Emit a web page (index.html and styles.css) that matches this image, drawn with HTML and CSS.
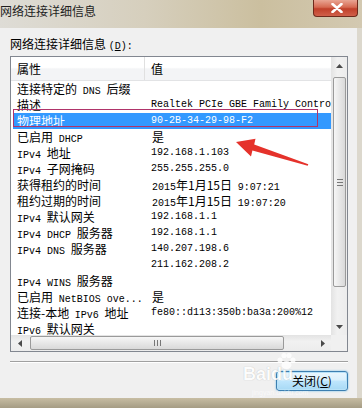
FILE: index.html
```html
<!DOCTYPE html>
<html lang="zh-CN">
<head>
  <meta charset="UTF-8">
  <title>网络连接详细信息</title>
  <link rel="stylesheet" href="styles.css">
</head>
<body>
  <div class="titlebar">
    <div class="title">网络连接详细信息</div>
    <div class="close">
      <svg width="12" height="10" viewBox="0 0 12 10"><path d="M1.5 1 L10.5 9 M10.5 1 L1.5 9" stroke="#fff" stroke-width="2.6" stroke-linecap="round"/></svg>
    </div>
  </div>

  <div class="client">
    <div class="label">网络连接详细信息 <span class="m">(<u>D</u>):</span></div>
    <div class="listbox">
      <div class="content">
        <div class="header">
          <div class="hk">属性</div>
          <div class="hv">值</div>
        </div>
        <div class="row"><div class="k">连接特定的 <span class="m">DNS</span> 后缀</div><div class="v"></div></div>
        <div class="row"><div class="k">描述</div><div class="v m">Realtek PCIe GBE Family Controller</div></div>
        <div class="row sel"><div class="k">物理地址</div><div class="v m">90-2B-34-29-98-F2</div></div>
        <div class="row"><div class="k">已启用 <span class="m">DHCP</span></div><div class="v">是</div></div>
        <div class="row"><div class="k"><span class="m">IPv4</span> 地址</div><div class="v m">192.168.1.103</div></div>
        <div class="row"><div class="k"><span class="m">IPv4</span> 子网掩码</div><div class="v m">255.255.255.0</div></div>
        <div class="row"><div class="k">获得租约的时间</div><div class="v"><span class="m">2015</span>年1月15日 <span class="m">9:07:21</span></div></div>
        <div class="row"><div class="k">租约过期的时间</div><div class="v"><span class="m">2015</span>年1月15日 <span class="m">19:07:20</span></div></div>
        <div class="row"><div class="k"><span class="m">IPv4</span> 默认网关</div><div class="v m">192.168.1.1</div></div>
        <div class="row"><div class="k"><span class="m">IPv4 DHCP</span> 服务器</div><div class="v m">192.168.1.1</div></div>
        <div class="row"><div class="k"><span class="m">IPv4 DNS</span> 服务器</div><div class="v m">140.207.198.6</div></div>
        <div class="row"><div class="k"></div><div class="v m">211.162.208.2</div></div>
        <div class="row"><div class="k"><span class="m">IPv4 WINS</span> 服务器</div><div class="v"></div></div>
        <div class="row"><div class="k">已启用 <span class="m">NetBIOS ove...</span></div><div class="v">是</div></div>
        <div class="row"><div class="k">连接-本地 <span class="m">IPv6</span> 地址</div><div class="v m">fe80::d113:350b:ba3a:200%12</div></div>
        <div class="row"><div class="k"><span class="m">IPv6</span> 默认网关</div><div class="v"></div></div>
      </div>

      <div class="vscroll">
        <div class="sbtn"><svg width="7" height="4" viewBox="0 0 7 4"><path d="M0 4 L3.5 0 L7 4 Z" fill="#4a4a4a"/></svg></div>
        <div class="vtrack">
          <div class="vthumb"><span class="grip-h"></span></div>
        </div>
        <div class="sbtn"><svg width="7" height="4" viewBox="0 0 7 4"><path d="M0 0 L3.5 4 L7 0 Z" fill="#4a4a4a"/></svg></div>
      </div>

      <div class="hscroll">
        <div class="sbtn"><svg width="4" height="7" viewBox="0 0 4 7"><path d="M4 0 L0 3.5 L4 7 Z" fill="#4a4a4a"/></svg></div>
        <div class="htrack">
          <div class="hthumb"><span class="grip-v"></span></div>
        </div>
        <div class="sbtn"><svg width="4" height="7" viewBox="0 0 4 7"><path d="M0 0 L4 3.5 L0 7 Z" fill="#4a4a4a"/></svg></div>
      </div>
      <div class="corner"></div>
    </div>

    <div class="separator"></div>
    <div class="buttons">
      <button class="btn">关闭(<u>C</u>)</button>
    </div>
  </div>
  <div class="frame-bottom"></div>

  <!-- annotation drawn over the screenshot -->
  <div class="mark"></div>
  <svg class="arrow" width="362" height="408" viewBox="0 0 362 408">
    <path d="M236 142 L255.5 138.8 L254.2 144.4 L308.3 164.3 L307.7 165.8 L252.4 150.6 L251 156.4 Z" fill="#e5322b"/>
  </svg>

  <div class="watermark">
    <svg class="paw" width="22" height="18" viewBox="0 0 22 18">
      <circle cx="5" cy="8" r="2.6" fill="#fff"/>
      <circle cx="9" cy="3.5" r="2.6" fill="#fff"/>
      <circle cx="14" cy="3.5" r="2.6" fill="#fff"/>
      <circle cx="18" cy="8" r="2.6" fill="#fff"/>
      <ellipse cx="11.5" cy="13" rx="5" ry="4" fill="#fff"/>
    </svg>
    <span class="wm-text">Baidu</span>
  </div>
  <div class="wm-url">jingyan.baidu.com</div>
</body>
</html>
```

FILE: styles.css
```css
body {
  margin: 0;
  width: 362px;
  height: 408px;
  overflow: hidden;
  position: relative;
  background: #dcd8cd;
  font-family: "Noto Sans CJK SC", sans-serif;
  font-size: 12px;
  color: #000;
}
.m {
  font-family: "Liberation Mono", "Noto Sans CJK SC", monospace;
  font-size: 10px;
  word-spacing: 0;
}
.titlebar {
  height: 28px;
  display: flex;
  align-items: flex-start;
  background: linear-gradient(90deg, #dedcd6 0%, #d6cfbd 40%, #cbbf9f 72%, #d3c9b1 100%);
}
.title {
  line-height: 22px;
  color: #1e1e1e;
}
.close {
  margin-left: auto;
  margin-right: 4px;
  width: 45px;
  height: 17px;
  box-sizing: border-box;
  border: 1px solid #6e2a1c;
  border-top: none;
  border-radius: 0 0 4px 4px;
  background: linear-gradient(#e9a593 0%, #d66a52 45%, #c0402a 55%, #d0604a 100%);
  display: flex;
  justify-content: center;
  align-items: center;
  padding-left: 3px;
}
.client {
  height: 370px;
  margin-right: 5px;
  background: #f0f0f0;
  padding: 0 9px 0 10px;
  display: flex;
  flex-direction: column;
}
.label {
  line-height: 16px;
  margin-top: 8px;
}
.listbox {
  margin-top: 1px;
  height: 296px;
  box-sizing: border-box;
  border: 1px solid #828790;
  background: #fff;
  display: grid;
  grid-template-columns: 1fr 16px;
  grid-template-rows: 1fr 16px;
}
.content {
  overflow: hidden;
  white-space: nowrap;
}
.header {
  display: flex;
  height: 23px;
  line-height: 23px;
  border-bottom: 1px solid #e2e3e5;
  background: linear-gradient(#ffffff 0%, #ffffff 45%, #f3f4f6 52%, #f3f4f6 100%);
}
.hk {
  width: 134px;
  box-sizing: border-box;
  padding-left: 6px;
  border-right: 1px solid #e0e0e0;
}
.hv {
  padding-left: 6px;
}
.row {
  display: flex;
  height: 16px;
  line-height: 16px;
  word-spacing: 3px;
}
.row .k {
  width: 134px;
  flex: none;
  box-sizing: border-box;
  padding-left: 6px;
  overflow: hidden;
}
.row .v {
  padding-left: 7px;
}
.row .v.m {
  padding-left: 6px;
}
.row.sel {
  background: linear-gradient(90deg, transparent 2px, #3399ff 2px);
  color: #fff;
}
.vscroll {
  display: flex;
  flex-direction: column;
  background: linear-gradient(90deg, #e3e3e3, #f1f1f1 40%, #ececec);
}
.sbtn {
  height: 17px;
  flex: none;
  display: flex;
  justify-content: center;
  align-items: center;
}
.vtrack {
  flex: 1;
  padding-top: 3px;
}
.vthumb {
  margin-left: 2px;
  width: 13px;
  height: 210px;
  box-sizing: border-box;
  border: 1px solid #9a9a9a;
  border-radius: 2px;
  background: linear-gradient(90deg, #f6f6f6, #e6e6e6 55%, #d9d9d9);
  display: flex;
  justify-content: center;
  align-items: center;
}
.grip-h {
  width: 6px;
  height: 5px;
  border-top: 1px solid #777;
  border-bottom: 1px solid #777;
  background: linear-gradient(transparent 2px, #777 2px, #777 3px, transparent 3px);
}
.hscroll {
  display: flex;
  background: linear-gradient(#e3e3e3, #f1f1f1 40%, #ececec);
}
.hscroll .sbtn {
  width: 17px;
  height: 16px;
}
.htrack {
  flex: 1;
  padding-left: 2px;
}
.hthumb {
  margin-top: 1px;
  width: 254px;
  height: 14px;
  box-sizing: border-box;
  border: 1px solid #9a9a9a;
  border-radius: 2px;
  background: linear-gradient(#f6f6f6, #e6e6e6 55%, #d9d9d9);
  display: flex;
  justify-content: center;
  align-items: center;
}
.grip-v {
  width: 5px;
  height: 6px;
  border-left: 1px solid #777;
  border-right: 1px solid #777;
  background: linear-gradient(90deg, transparent 2px, #777 2px, #777 3px, transparent 3px);
}
.corner {
  background: #f0f0f0;
}
.separator {
  margin-top: 9px;
  border-top: 1px solid #a0a0a0;
  border-bottom: 1px solid #fff;
}
.buttons {
  display: flex;
  justify-content: flex-end;
  margin-top: 8px;
}
.btn {
  width: 72px;
  height: 20px;
  padding: 0;
  border: 1px solid #3c7fb1;
  border-radius: 3px;
  box-shadow: 0 0 2px #5bb6e8, inset 0 0 0 1px #b8e2f8;
  background: linear-gradient(#eaf6fd 0%, #d9f0fc 45%, #bee6fd 50%, #a7d9f5 100%);
  font-family: "Noto Sans CJK SC", sans-serif;
  font-size: 12px;
  line-height: 16px;
  color: #000;
}
.frame-bottom {
  height: 10px;
  background: linear-gradient(#c7bda3, #a59c84);
}
.mark {
  position: absolute;
  left: 13px;
  top: 109px;
  width: 305px;
  height: 18px;
  box-sizing: border-box;
  border: 1.5px solid #b0346a;
}
.arrow {
  position: absolute;
  left: 0;
  top: 0;
}
.watermark {
  position: absolute;
  left: 243px;
  top: 352px;
  width: 60px;
  height: 36px;
  opacity: 0.85;
}
.paw {
  position: absolute;
  left: 32px;
  top: 0;
}
.wm-text {
  position: absolute;
  left: 0;
  top: 12px;
  font-family: "Liberation Sans", sans-serif;
  font-size: 18px;
  font-weight: bold;
  color: #fff;
  text-shadow: 0 0 1px rgba(0, 0, 0, 0.3);
}
.wm-url {
  position: absolute;
  left: 252px;
  top: 389px;
  font-family: "Liberation Sans", sans-serif;
  font-size: 7px;
  line-height: 8px;
  color: rgba(255, 255, 255, 0.6);
}
```
